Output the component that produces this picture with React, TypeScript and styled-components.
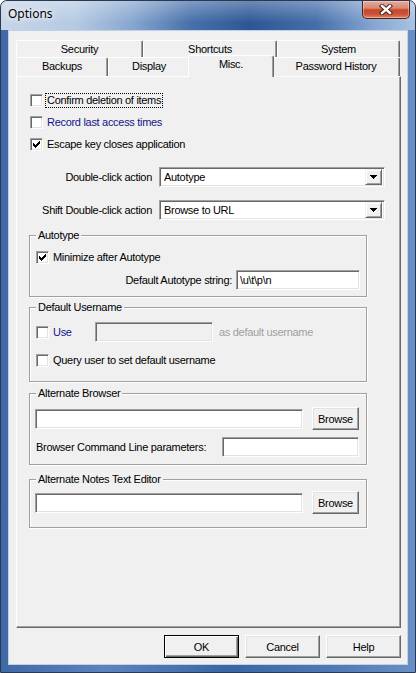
import React from "react";
import styled, { createGlobalStyle, css } from "styled-components";

const GlobalStyle = createGlobalStyle`
  html, body { margin: 0; padding: 0; }
  body {
    width: 416px; height: 673px; overflow: hidden; background: #ffffff;
    font-family: "Liberation Sans", Arial, sans-serif; font-size: 11px; color: #000;
    letter-spacing: -0.3px;
  }
  *, *::before, *::after { box-sizing: border-box; }
`;

const Window = styled.div`
  width: 416px;
  height: 673px;
  display: flex;
  flex-direction: column;
  border: 1px solid #2a3850;
  border-radius: 7px 7px 0 0;
  overflow: hidden;
  background: linear-gradient(to right, #3f68a6 0%, #5b84bf 25%, #3b66a6 55%, #4f79b5 80%, #6a8fc5 100%);
`;

const TitleBar = styled.div`
  height: 29px;
  flex: none;
  display: flex;
  justify-content: space-between;
  align-items: flex-start;
  padding-left: 7px;
  background:
    linear-gradient(to bottom, rgba(255,255,255,0.3), rgba(255,255,255,0) 75%),
    linear-gradient(to right, #c6d5e8 0%, #b6cae3 18%, #86a5ce 32%, #4670aa 46%, #2e5695 60%, #446ea9 76%, #86a6d2 90%, #a9c2e2 100%);
`;

const Title = styled.div`
  margin-top: 5px;
  font-family: "Noto Sans", "Liberation Sans", sans-serif;
  font-size: 12px;
  line-height: 16px;
  letter-spacing: 0;
  color: #000;
  text-shadow: 0 0 8px #fff, 0 0 4px rgba(255,255,255,0.9);
`;

const CloseButton = styled.div`
  width: 48px;
  height: 18px;
  margin-right: 5px;
  display: flex;
  align-items: center;
  justify-content: center;
  border: 1px solid #4e2219;
  border-top: none;
  border-radius: 0 0 5px 5px;
  background: linear-gradient(to bottom, #e9aa9b 0%, #d98872 42%, #c4482c 52%, #cc5136 78%, #e28560 100%);
  box-shadow: inset 0 0 0 1px rgba(255,255,255,0.35);
`;

const Frame = styled.div`
  flex: 1;
  display: flex;
  padding: 0 7px 7px;
`;

const Client = styled.div`
  flex: 1;
  display: flex;
  flex-direction: column;
  background: #f0f0f0;
  border: 1px solid #c3d1e4;
  padding: 9px 6px 6px 7px;
`;

const TabControl = styled.div`
  flex: 1;
  display: flex;
  flex-direction: column;
`;

const TabRow = styled.div<{ $h: number }>`
  display: flex;
  height: ${(p) => p.$h}px;
  align-items: flex-end;
`;

const Tab = styled.div<{ $w: number; $active?: boolean }>`
  width: ${(p) => p.$w}px;
  height: 100%;
  flex: none;
  display: flex;
  justify-content: center;
  align-items: flex-start;
  padding-top: 2px;
  line-height: 13px;
  background: #f0f0f0;
  border-top: 1px solid #fff;
  border-left: 1px solid #fff;
  border-right: 1px solid #696969;
  border-radius: 2px 2px 0 0;
  box-shadow: inset -1px 0 0 #a0a0a0;
  ${(p) =>
    p.$active &&
    css`
      width: ${p.$w + 4}px;
      height: calc(100% + 3px);
      margin: -2px -2px -1px;
      position: relative;
      z-index: 1;
    `}
`;

const Panel = styled.div`
  flex: 1;
  display: flex;
  flex-direction: column;
  align-items: flex-start;
  border: 1px solid;
  border-color: #fff #696969 #696969 #fff;
  box-shadow: inset -1px -1px 0 #a0a0a0;
  padding-top: 16px;
`;

const CheckList = styled.div`
  display: flex;
  flex-direction: column;
  gap: 7px;
  margin-left: 13px;
`;

const CheckRow = styled.div<{ $indent?: number }>`
  display: flex;
  align-items: center;
  gap: 2px;
  height: 15px;
  margin-left: ${(p) => p.$indent ?? 0}px;
`;

const Box = styled.span`
  width: 13px;
  height: 13px;
  flex: none;
  display: flex;
  align-items: flex-start;
  justify-content: flex-start;
  padding: 1px;
  background: #fff;
  border: 1px solid;
  border-color: #a0a0a0 #fff #fff #a0a0a0;
  box-shadow: inset 1px 1px 0 #696969, inset -1px -1px 0 #e3e3e3;
`;

const CheckText = styled.span<{ $focus?: boolean; $link?: boolean }>`
  padding: 0 1px;
  line-height: 13px;
  white-space: nowrap;
  border: 1px dotted ${(p) => (p.$focus ? "#000" : "transparent")};
  color: ${(p) => (p.$link ? "#14148a" : "#000")};
`;

const ActionGrid = styled.div`
  display: grid;
  grid-template-columns: 135px 226px;
  column-gap: 7px;
  row-gap: 13px;
  align-items: center;
  margin-top: 15px;
`;

const RightLabel = styled.span`
  text-align: right;
  white-space: nowrap;
`;

const Sunken = css`
  border: 1px solid;
  border-color: #a0a0a0 #fff #fff #a0a0a0;
  box-shadow: inset 1px 1px 0 #696969, inset -1px -1px 0 #e3e3e3;
`;

const Combo = styled.div`
  height: 20px;
  display: flex;
  align-items: center;
  background: #fff;
  padding: 2px 2px 2px 4px;
  ${Sunken}
`;

const ComboText = styled.span`
  flex: 1;
  line-height: 13px;
  white-space: nowrap;
`;

const DropButton = styled.span`
  width: 17px;
  height: 16px;
  flex: none;
  display: flex;
  align-items: center;
  justify-content: center;
  background: #f0f0f0;
  border: 1px solid;
  border-color: #f0f0f0 #696969 #696969 #f0f0f0;
  box-shadow: inset 1px 1px 0 #fff, inset -1px -1px 0 #a0a0a0;
`;

const Group = styled.fieldset<{ $mt: number; $pt: number; $pb: number }>`
  width: 338px;
  min-width: 0;
  margin: ${(p) => p.$mt}px 0 0 12px;
  padding: ${(p) => p.$pt}px 6px ${(p) => p.$pb}px 5px;
  border: 1px solid #a0a0a0;
  box-shadow: inset 1px 1px 0 #fff, 1px 1px 0 #fff;
  display: flex;
  flex-direction: column;
  align-items: stretch;
`;

const Legend = styled.legend`
  padding: 0 2px;
  margin-left: 1px;
  line-height: 13px;
  background: #f0f0f0;
`;

const Edit = styled.div<{ $w: number; $disabled?: boolean }>`
  width: ${(p) => p.$w}px;
  height: 20px;
  flex: none;
  display: flex;
  align-items: center;
  padding: 0 3px;
  line-height: 13px;
  white-space: nowrap;
  background: ${(p) => (p.$disabled ? "#f0f0f0" : "#fff")};
  ${Sunken}
`;

const FieldRow = styled.div<{ $mt?: number; $justify?: string; $gap?: number }>`
  display: flex;
  align-items: center;
  justify-content: ${(p) => p.$justify ?? "flex-start"};
  gap: ${(p) => p.$gap ?? 0}px;
  margin-top: ${(p) => p.$mt ?? 0}px;
`;

const PlainText = styled.span<{ $disabled?: boolean; $ml?: number }>`
  white-space: nowrap;
  line-height: 13px;
  margin-left: ${(p) => p.$ml ?? 0}px;
  color: ${(p) => (p.$disabled ? "#a0a0a0" : "#000")};
`;

const UseCell = styled.div`
  width: 59px;
  flex: none;
  margin-left: 1px;
`;

const PushButton = styled.button<{ $w: number; $h: number; $default?: boolean }>`
  width: ${(p) => p.$w}px;
  height: ${(p) => p.$h}px;
  flex: none;
  padding: 0;
  font-family: "Liberation Sans", Arial, sans-serif;
  font-size: 11px;
  letter-spacing: -0.3px;
  color: #000;
  background: #f0f0f0;
  border: 1px solid;
  ${(p) =>
    p.$default
      ? css`
          border-color: #000;
          box-shadow: inset 1px 1px 0 #fff, inset -1px -1px 0 #696969, inset -2px -2px 0 #a0a0a0;
        `
      : css`
          border-color: #fff #696969 #696969 #fff;
          box-shadow: inset -1px -1px 0 #a0a0a0, inset 1px 1px 0 #e3e3e3;
        `}
`;

const ButtonRow = styled.div`
  display: flex;
  justify-content: flex-end;
  gap: 6px;
  margin-top: 7px;
`;

const CheckMark = () => (
  <svg width="7" height="7" viewBox="0 0 7 7" shapeRendering="crispEdges" style={{ marginLeft: 1, marginTop: 1 }}>
    {[2, 3, 4, 3, 2, 1, 0].map((y, x) => (
      <rect key={x} x={x} y={y} width="1" height="3" fill="#000" />
    ))}
  </svg>
);

const CheckBox = ({ checked }: { checked?: boolean }) => <Box>{checked && <CheckMark />}</Box>;

const Check = ({
  label,
  checked,
  focus,
  link,
  indent,
}: {
  label: string;
  checked?: boolean;
  focus?: boolean;
  link?: boolean;
  indent?: number;
}) => (
  <CheckRow $indent={indent}>
    <CheckBox checked={checked} />
    <CheckText $focus={focus} $link={link}>
      {label}
    </CheckText>
  </CheckRow>
);

const DropArrow = () => (
  <svg width="7" height="4" viewBox="0 0 7 4" shapeRendering="crispEdges">
    <rect x="0" y="0" width="7" height="1" fill="#000" />
    <rect x="1" y="1" width="5" height="1" fill="#000" />
    <rect x="2" y="2" width="3" height="1" fill="#000" />
    <rect x="3" y="3" width="1" height="1" fill="#000" />
  </svg>
);

const ComboBox = ({ value }: { value: string }) => (
  <Combo>
    <ComboText>{value}</ComboText>
    <DropButton>
      <DropArrow />
    </DropButton>
  </Combo>
);

const CloseGlyph = () => (
  <svg width="14" height="11" viewBox="0 0 14 11">
    <path d="M3 2 L11 9 M11 2 L3 9" stroke="#3b1610" strokeWidth="4.2" strokeLinecap="square" fill="none" />
    <path d="M3 2 L11 9 M11 2 L3 9" stroke="#ffffff" strokeWidth="2.4" strokeLinecap="square" fill="none" />
  </svg>
);

export default function App() {
  return (
    <>
      <GlobalStyle />
      <Window>
        <TitleBar>
          <Title>Options</Title>
          <CloseButton>
            <CloseGlyph />
          </CloseButton>
        </TitleBar>
        <Frame>
          <Client>
            <TabControl>
              <TabRow $h={17}>
                <Tab $w={127}>Security</Tab>
                <Tab $w={134}>Shortcuts</Tab>
                <Tab $w={123}>System</Tab>
              </TabRow>
              <TabRow $h={19}>
                <Tab $w={92}>Backups</Tab>
                <Tab $w={82}>Display</Tab>
                <Tab $w={82} $active>
                  Misc.
                </Tab>
                <Tab $w={128}>Password History</Tab>
              </TabRow>
              <Panel>
                <CheckList>
                  <Check label="Confirm deletion of items" focus />
                  <Check label="Record last access times" link />
                  <Check label="Escape key closes application" checked />
                </CheckList>

                <ActionGrid>
                  <RightLabel>Double-click action</RightLabel>
                  <ComboBox value="Autotype" />
                  <RightLabel>Shift Double-click action</RightLabel>
                  <ComboBox value="Browse to URL" />
                </ActionGrid>

                <Group $mt={9} $pt={8} $pb={6}>
                  <Legend>Autotype</Legend>
                  <Check label="Minimize after Autotype" checked indent={1} />
                  <FieldRow $mt={5} $justify="flex-end" $gap={4}>
                    <PlainText>Default Autotype string:</PlainText>
                    <Edit $w={124}>{"\\u\\t\\p\\n"}</Edit>
                  </FieldRow>
                </Group>

                <Group $mt={4} $pt={8} $pb={13}>
                  <Legend>Default Username</Legend>
                  <FieldRow>
                    <UseCell>
                      <Check label="Use" link />
                    </UseCell>
                    <Edit $w={118} $disabled />
                    <PlainText $disabled $ml={6}>
                      as default username
                    </PlainText>
                  </FieldRow>
                  <FieldRow $mt={11}>
                    <Check label="Query user to set default username" indent={1} />
                  </FieldRow>
                </Group>

                <Group $mt={5} $pt={7} $pb={7}>
                  <Legend>Alternate Browser</Legend>
                  <FieldRow $gap={9}>
                    <Edit $w={268} />
                    <PushButton $w={47} $h={23}>
                      Browse
                    </PushButton>
                  </FieldRow>
                  <FieldRow $mt={7} $justify="space-between">
                    <PlainText $ml={1}>Browser Command Line parameters:</PlainText>
                    <Edit $w={137} style={{ marginRight: 1 }} />
                  </FieldRow>
                </Group>

                <Group $mt={8} $pt={5} $pb={13}>
                  <Legend>Alternate Notes Text Editor</Legend>
                  <FieldRow $gap={9}>
                    <Edit $w={268} />
                    <PushButton $w={47} $h={23}>
                      Browse
                    </PushButton>
                  </FieldRow>
                </Group>
              </Panel>
            </TabControl>
            <ButtonRow>
              <PushButton $w={75} $h={23} $default>
                OK
              </PushButton>
              <PushButton $w={75} $h={23}>
                Cancel
              </PushButton>
              <PushButton $w={75} $h={23}>
                Help
              </PushButton>
            </ButtonRow>
          </Client>
        </Frame>
      </Window>
    </>
  );
}
